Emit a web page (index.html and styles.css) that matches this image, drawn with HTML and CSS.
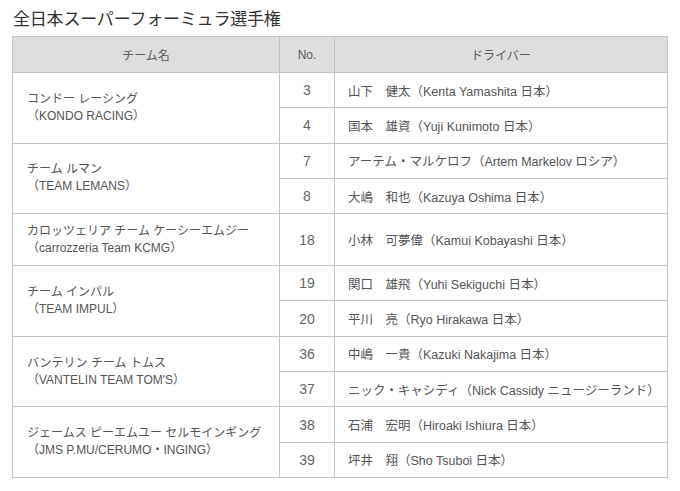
FILE: index.html
```html
<!DOCTYPE html>
<html lang="ja">
<head>
<meta charset="utf-8">
<link rel="stylesheet" href="styles.css">
</head>
<body>
<h1 class="title">全日本スーパーフォーミュラ選手権</h1>
<table class="grid">
  <thead>
    <tr class="head">
      <th class="c-team">チーム名</th>
      <th class="c-no">No.</th>
      <th class="c-drv">ドライバー</th>
    </tr>
  </thead>
  <tbody>
    <tr>
      <td class="team" rowspan="2">コンドー レーシング<br>（KONDO RACING）</td>
      <td class="no">3</td>
      <td class="drv">山下　健太（Kenta Yamashita 日本）</td>
    </tr>
    <tr>
      <td class="no">4</td>
      <td class="drv">国本　雄資（Yuji Kunimoto 日本）</td>
    </tr>
    <tr>
      <td class="team" rowspan="2">チーム ルマン<br>（TEAM LEMANS）</td>
      <td class="no">7</td>
      <td class="drv">アーテム・マルケロフ（Artem Markelov ロシア）</td>
    </tr>
    <tr>
      <td class="no">8</td>
      <td class="drv">大嶋　和也（Kazuya Oshima 日本）</td>
    </tr>
    <tr class="tall">
      <td class="team">カロッツェリア チーム ケーシーエムジー<br>（carrozzeria Team KCMG）</td>
      <td class="no">18</td>
      <td class="drv">小林　可夢偉（Kamui Kobayashi 日本）</td>
    </tr>
    <tr>
      <td class="team" rowspan="2">チーム インパル<br>（TEAM IMPUL）</td>
      <td class="no">19</td>
      <td class="drv">関口　雄飛（Yuhi Sekiguchi 日本）</td>
    </tr>
    <tr>
      <td class="no">20</td>
      <td class="drv">平川　亮（Ryo Hirakawa 日本）</td>
    </tr>
    <tr>
      <td class="team" rowspan="2">バンテリン チーム トムス<br>（VANTELIN TEAM TOM'S）</td>
      <td class="no">36</td>
      <td class="drv">中嶋　一貴（Kazuki Nakajima 日本）</td>
    </tr>
    <tr>
      <td class="no">37</td>
      <td class="drv">ニック・キャシディ（Nick Cassidy ニュージーランド）</td>
    </tr>
    <tr>
      <td class="team" rowspan="2">ジェームス ピーエムユー セルモインギング<br>（JMS P.MU/CERUMO・INGING）</td>
      <td class="no">38</td>
      <td class="drv">石浦　宏明（Hiroaki Ishiura 日本）</td>
    </tr>
    <tr>
      <td class="no">39</td>
      <td class="drv">坪井　翔（Sho Tsuboi 日本）</td>
    </tr>
  </tbody>
</table>
</body>
</html>
```

FILE: styles.css
```css
html, body {
  margin: 0;
  background: #ffffff;
}
body {
  padding: 6px 12px 0 12px;
  font-family: "Liberation Sans", "Noto Sans CJK JP", sans-serif;
  color: #555555;
}
.title {
  margin: 0 0 6px 1px;
  font-size: 17px;
  line-height: 24px;
  font-weight: normal;
  color: #333333;
  font-family: "Noto Sans CJK JP", sans-serif;
  letter-spacing: -0.2px;
}
.grid {
  border-collapse: collapse;
  width: 656px;
  table-layout: fixed;
  font-size: 12.5px;
}
.grid th, .grid td {
  border: 1px solid #c4c4c4;
  padding: 0;
  font-weight: normal;
}
.c-team { width: 266px; }
.c-no { width: 54px; }
.head th {
  background: #dedede;
  height: 35px;
  text-align: center;
  color: #5a5a5a;
  font-size: 12px;
}
.grid tbody tr { height: 35.3px; }
.grid tbody tr.tall { height: 52px; }
.team {
  padding-left: 14px !important;
  text-align: left;
  line-height: 17px;
  font-size: 12px;
}
.no {
  text-align: center;
  font-size: 14px;
  color: #666666;
}
.drv {
  padding-left: 13px !important;
  text-align: left;
}
```
